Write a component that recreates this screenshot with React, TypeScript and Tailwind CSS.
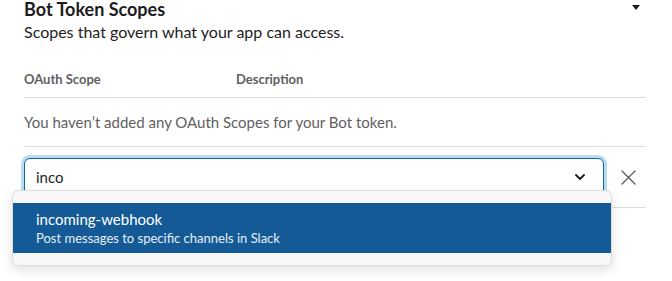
import React, { useState } from 'react';

const ChevronDown = () => (
    <svg width="10" height="6" viewBox="0 0 10 6" fill="none">
        <path d="M1 1l4 4 4-4" stroke="#1d1c1d" strokeWidth="1.8" strokeLinecap="round" strokeLinejoin="round" />
    </svg>
);

const CloseIcon = () => (
    <svg width="15" height="15" viewBox="0 0 15 15" fill="none">
        <path d="M1 1l13 13M14 1L1 14" stroke="#616061" strokeWidth="1.4" strokeLinecap="round" />
    </svg>
);

export default function App() {
    const [query, setQuery] = useState('inco');

    return (
        <div className="w-[672px] h-[281px] bg-white overflow-hidden font-['Lato',sans-serif] text-[#1d1c1d]">
            <div className="pl-6 pr-[26px]">
                <div className="flex justify-between items-start">
                    <h2 className="text-[18px] leading-[18px] font-bold">Bot Token Scopes</h2>
                    <svg width="8" height="5" viewBox="0 0 8 5" className="mt-[5px] mr-[6px]">
                        <path d="M0 0h8L4 5z" fill="#1d1c1d" />
                    </svg>
                </div>
                <p className="mt-[3px] text-[16px] leading-[22px]">Scopes that govern what your app can access.</p>

                <div className="mt-[27px] flex pb-[9px] border-b border-[#dddddd] text-[13px] leading-[18px] font-bold text-[#616061]">
                    <div className="w-[212px]">OAuth Scope</div>
                    <div>Description</div>
                </div>

                <div className="pt-[13px] pb-[13px] border-b border-[#dddddd] text-[15px] leading-[22px] text-[#616061]">
                    You haven’t added any OAuth Scopes for your Bot token.
                </div>

                <div className="pt-[11px] pb-[11px] border-b border-[#dddddd] flex items-center">
                    <div className="relative">
                        <div className="w-[580px] h-[38px] flex items-center rounded-[6px] border border-[#1264a3] shadow-[0_0_0_3px_#b9dcf1] bg-white pl-[11px] pr-[18px]">
                            <input
                                value={query}
                                onChange={(e) => setQuery(e.target.value)}
                                className="flex-1 outline-none bg-transparent text-[15px] text-[#1d1c1d]"
                            />
                            <ChevronDown />
                        </div>
                        <div className="absolute left-[-12px] top-[32px] w-[600px] z-10 rounded-[6px] border border-[#dddddd] bg-[#f8f8f8] shadow-[0_4px_12px_rgba(0,0,0,0.12)] py-[12px]">
                            <div className="bg-[#145a96] text-white pl-[23px] pt-[6px] pb-[6px]">
                                <div className="text-[15px] leading-[20px]">incoming-webhook</div>
                                <div className="text-[13px] leading-[18px] text-white/90">Post messages to specific channels in Slack</div>
                            </div>
                        </div>
                    </div>
                    <button type="button" className="ml-[17px] p-0">
                        <CloseIcon />
                    </button>
                </div>
            </div>
        </div>
    );
}
